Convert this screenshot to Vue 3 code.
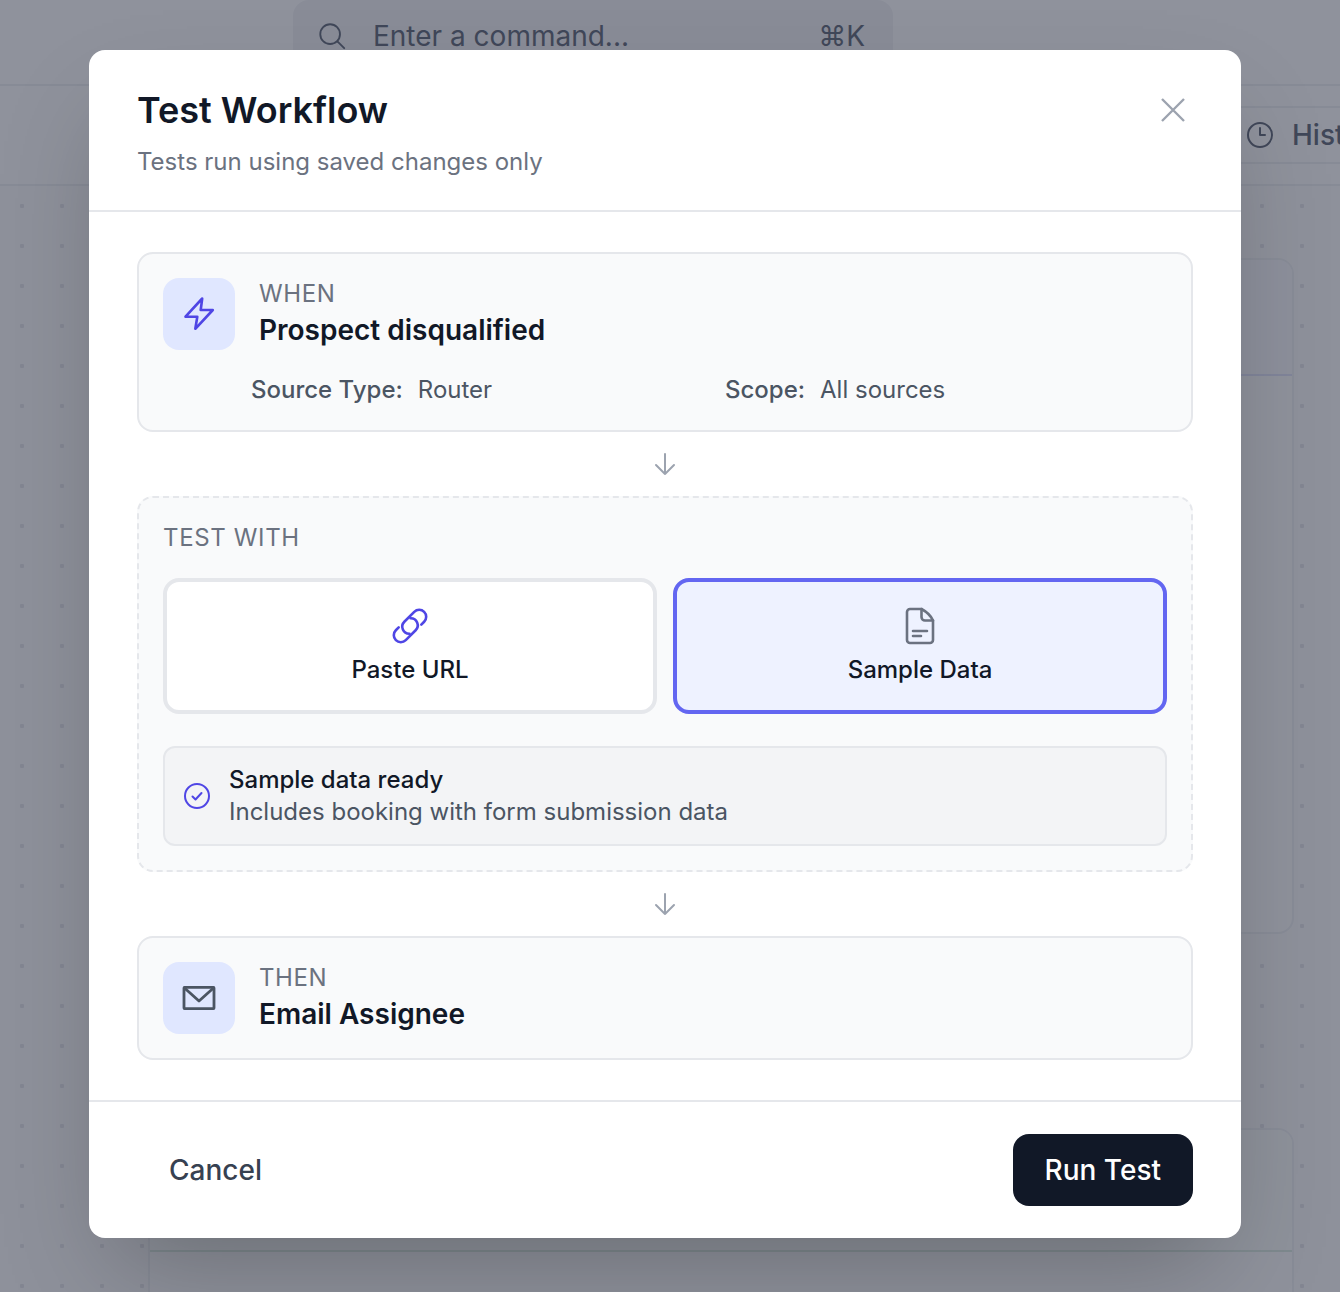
<template>
  <div class="page">
    <div class="topbar">
      <div class="search">
        <svg class="search-icon" viewBox="0 0 32 32" fill="none" stroke="currentColor" stroke-width="2" stroke-linecap="round">
          <circle cx="14" cy="14" r="10.5" />
          <path d="M22 22l7 7" />
        </svg>
        <span class="search-text">Enter a command...</span>
        <span class="search-key">⌘K</span>
      </div>
    </div>
    <div class="toolbar">
      <div class="history">
        <svg class="history-icon" viewBox="0 0 28 28" fill="none" stroke="currentColor" stroke-width="2" stroke-linecap="round" stroke-linejoin="round">
          <circle cx="14" cy="14" r="12" />
          <path d="M14 7v7h5" />
        </svg>
        <span>History</span>
      </div>
    </div>
    <div class="canvas">
      <div class="flow-card">
        <div class="flow-head"></div>
      </div>
      <div class="flow-card second">
        <div class="flow-head green"></div>
      </div>
    </div>

    <div class="overlay">
      <div class="modal">
        <header class="modal-head">
          <div>
            <h1>Test Workflow</h1>
            <p>Tests run using saved changes only</p>
          </div>
          <svg class="close" viewBox="0 0 24 24" fill="none" stroke="currentColor" stroke-width="2.4">
            <path d="M1 1l22 22M23 1L1 23" />
          </svg>
        </header>

        <div class="modal-body">
          <section class="step">
            <div class="step-main">
              <div class="step-icon">
                <svg viewBox="0 0 40 40" fill="none" stroke="currentColor" stroke-width="2.6" stroke-linejoin="round" stroke-linecap="round" class="bolt">
                  <path d="M23.2 4.5L6.5 22.7H18.3L16.3 34.8L33.8 16H21.7L23.2 4.5Z" />
                </svg>
              </div>
              <div>
                <div class="step-label">WHEN</div>
                <div class="step-name">Prospect disqualified</div>
              </div>
            </div>
            <div class="step-meta">
              <div v-for="m in meta" :key="m.label">
                <span class="meta-label">{{ m.label }}</span><span class="meta-value">{{ m.value }}</span>
              </div>
            </div>
          </section>

          <div class="arrow">
            <svg viewBox="0 0 24 24" fill="none" stroke="currentColor" stroke-width="2" stroke-linecap="round" stroke-linejoin="round">
              <path d="M12 2v20M3 13l9 9 9-9" />
            </svg>
          </div>

          <section class="test-with">
            <div class="step-label test-label">TEST WITH</div>
            <div class="options">
              <button class="option">
                <svg viewBox="0 0 40 40" fill="none" stroke="#4f46e5" stroke-width="2.6" stroke-linecap="round" stroke-linejoin="round" class="option-icon">
                  <g transform="rotate(-45 20 20)">
                    <path d="M29 27H33A7 7 0 0 0 33 13H19A7 7 0 0 0 14.2 25.1" />
                    <path d="M11 13H7A7 7 0 0 0 7 27H21A7 7 0 0 0 25.8 14.9" />
                  </g>
                </svg>
                Paste URL
              </button>
              <button class="option active">
                <svg viewBox="0 0 40 40" fill="none" stroke="#6b7280" stroke-width="2.6" stroke-linecap="round" stroke-linejoin="round" class="option-icon">
                  <path d="M10 3H21.5C27 6 31 10 33 14.5V34A3 3 0 0 1 30 37H10A3 3 0 0 1 7 34V6A3 3 0 0 1 10 3Z" />
                  <path d="M21.5 3V11A3.5 3.5 0 0 0 25 14.5H33" />
                  <path d="M13 25H27M13 30H21" />
                </svg>
                Sample Data
              </button>
            </div>
            <div class="ready">
              <svg viewBox="0 0 28 28" fill="none" stroke="#4f46e5" stroke-width="2" stroke-linecap="round" stroke-linejoin="round" class="ready-icon">
                <circle cx="14" cy="14" r="12" />
                <path d="M9.5 14.5l3 3 6-6.5" />
              </svg>
              <div>
                <div class="ready-title">Sample data ready</div>
                <div class="ready-text">Includes booking with form submission data</div>
              </div>
            </div>
          </section>

          <div class="arrow">
            <svg viewBox="0 0 24 24" fill="none" stroke="currentColor" stroke-width="2" stroke-linecap="round" stroke-linejoin="round">
              <path d="M12 2v20M3 13l9 9 9-9" />
            </svg>
          </div>

          <section class="step">
            <div class="step-main">
              <div class="step-icon">
                <svg viewBox="0 0 40 40" fill="none" stroke="#4b5563" stroke-width="2.8" stroke-linejoin="round" stroke-linecap="round" class="mail">
                  <rect x="5" y="9.4" width="30" height="21.2" rx="0.5" />
                  <path d="M5.5 10L20 23L34.5 10" />
                </svg>
              </div>
              <div>
                <div class="step-label">THEN</div>
                <div class="step-name">Email Assignee</div>
              </div>
            </div>
          </section>
        </div>

        <footer class="modal-foot">
          <button class="cancel">Cancel</button>
          <button class="run">Run Test</button>
        </footer>
      </div>
    </div>
  </div>
</template>

<script setup>
const meta = [
  { label: "Source Type:", value: "Router" },
  { label: "Scope:", value: "All sources" },
];
</script>

<style>
html,
body {
  margin: 0;
  overflow: hidden;
}
</style>

<style scoped>
* {
  box-sizing: border-box;
}

.page {
  position: relative;
  height: 1292px;
  overflow: hidden;
  background-color: #fafafa;
  font-family: Inter, "Liberation Sans", sans-serif;
  color: #111827;
}

.topbar {
  height: 86px;
  border-bottom: 2px solid #f0f1f4;
  background: #fff;
  padding-left: 293px;
}

.search {
  width: 600px;
  height: 72px;
  background: #f3f4f6;
  border-radius: 16px;
  display: flex;
  align-items: center;
  padding: 0 28px 0 24px;
  font-size: 28px;
  color: #6b7280;
}

.search-icon {
  width: 30px;
  height: 30px;
  margin-right: 26px;
}

.search-text {
  flex: 1;
}

.history {
  display: flex;
  align-items: center;
  gap: 18px;
  height: 58px;
  width: 400px;
  flex: none;
  padding-left: 16px;
  border: 2px solid #f0f1f4;
  background: #fff;
  border-radius: 12px;
  font-size: 28px;
  font-weight: 500;
  color: #6b7280;
}

.history-icon {
  width: 28px;
  height: 28px;
}

.toolbar {
  height: 100px;
  padding: 20px 0 0 1228px;
  display: flex;
  border-bottom: 2px solid #f0f1f4;
  background: #fff;
  overflow: hidden;
}

.canvas {
  height: 1106px;
  padding: 72px 0 0 148px;
  background-color: #fefefe;
  background-image: radial-gradient(circle, #e8e9ed 2px, transparent 2.5px);
  background-size: 40px 40px;
  background-position: 2px 0px;
}

.flow-card {
  width: 1146px;
  height: 676px;
  background: #fff;
  border: 2px solid #f2f3f5;
  border-radius: 16px;
  overflow: hidden;
}

.flow-card.second {
  height: 300px;
  margin-top: 194px;
}

.flow-head {
  height: 116px;
  background: #fbfbff;
  border-bottom: 2px solid #e4e6fb;
}

.flow-head.green {
  height: 122px;
  background: #fdfffe;
  border-bottom-color: #dfeee5;
}

.overlay {
  position: absolute;
  inset: 0;
  background: rgba(17, 24, 45, 0.47);
}

.modal {
  position: absolute;
  left: 89px;
  top: 50px;
  width: 1152px;
  height: 1188px;
  background: #fff;
  border-radius: 16px;
  box-shadow: 0 50px 100px -24px rgba(0, 0, 0, 0.25);
  display: flex;
  flex-direction: column;
}

.modal-head {
  height: 162px;
  border-bottom: 2px solid #e5e7eb;
  padding: 40px 56px 0 48px;
  display: flex;
  justify-content: space-between;
  align-items: flex-start;
}

h1 {
  margin: 0;
  font-size: 36px;
  line-height: 40px;
  font-weight: 600;
  color: #111827;
}

.modal-head p {
  margin: 16px 0 0;
  font-size: 24px;
  line-height: 32px;
  color: #6b7280;
}

.close {
  width: 24px;
  height: 24px;
  margin-top: 8px;
  color: #9ca3af;
}

.modal-body {
  flex: 1;
  padding: 40px 48px;
}

.step {
  background: #f9fafb;
  border: 2px solid #e5e7eb;
  border-radius: 16px;
  padding: 24px;
}

.step-main {
  display: flex;
  align-items: center;
  gap: 24px;
}

.step-icon {
  width: 72px;
  height: 72px;
  flex: none;
  border-radius: 16px;
  background: #e0e7ff;
  display: flex;
  align-items: center;
  justify-content: center;
}

.bolt {
  width: 40px;
  height: 40px;
  color: #4f46e5;
}

.mail {
  width: 40px;
  height: 40px;
}

.step-label {
  font-size: 24px;
  line-height: 32px;
  letter-spacing: 0.6px;
  color: #6b7280;
}

.step-name {
  margin: 2px 0;
  font-size: 28px;
  line-height: 36px;
  font-weight: 600;
  color: #111827;
}

.step-meta {
  margin: 24px 0 0 88px;
  display: grid;
  grid-template-columns: 1fr 1fr;
  gap: 32px;
  font-size: 24px;
  line-height: 32px;
}

.meta-label {
  font-weight: 500;
  color: #4b5563;
}

.meta-value {
  margin-left: 15px;
  color: #4b5563;
}

.arrow {
  height: 64px;
  display: flex;
  align-items: center;
  justify-content: center;
  color: #9ca3af;
}

.arrow svg {
  width: 24px;
  height: 24px;
}

.test-with {
  background: #f9fafb;
  border: 2px dashed #e5e7eb;
  border-radius: 16px;
  padding: 24px;
}

.test-label {
  margin-bottom: 24px;
  letter-spacing: 0.65px;
}

.options {
  display: grid;
  grid-template-columns: 1fr 1fr;
  gap: 16px;
}

.option {
  height: 136px;
  border: 4px solid #e5e7eb;
  border-radius: 16px;
  background: #fff;
  display: flex;
  flex-direction: column;
  align-items: center;
  justify-content: flex-start;
  padding: 24px 0 0;
  font-family: inherit;
  font-size: 24px;
  line-height: 32px;
  font-weight: 500;
  color: #111827;
}

.option.active {
  border-color: #6366f1;
  background: #eef2ff;
}

.option-icon {
  width: 40px;
  height: 40px;
  margin-bottom: 8px;
}

.ready {
  margin-top: 32px;
  height: 100px;
  border: 2px solid #e5e7eb;
  border-radius: 12px;
  background: #f3f4f6;
  display: flex;
  align-items: center;
  gap: 18px;
  padding: 0 18px;
}

.ready-icon {
  width: 28px;
  height: 28px;
  flex: none;
}

.ready-title {
  font-size: 24px;
  line-height: 32px;
  font-weight: 500;
  color: #111827;
}

.ready-text {
  font-size: 24px;
  line-height: 32px;
  color: #4b5563;
}

.modal-foot {
  height: 138px;
  border-top: 2px solid #e5e7eb;
  padding: 32px 48px;
  display: flex;
  justify-content: space-between;
}

.modal-foot button {
  height: 72px;
  padding: 0 32px;
  border: 0;
  border-radius: 16px;
  font-family: inherit;
  font-size: 28px;
  font-weight: 500;
}

.cancel {
  background: #fff;
  color: #374151;
}

.run {
  background: #111827;
  color: #fff;
}
</style>
